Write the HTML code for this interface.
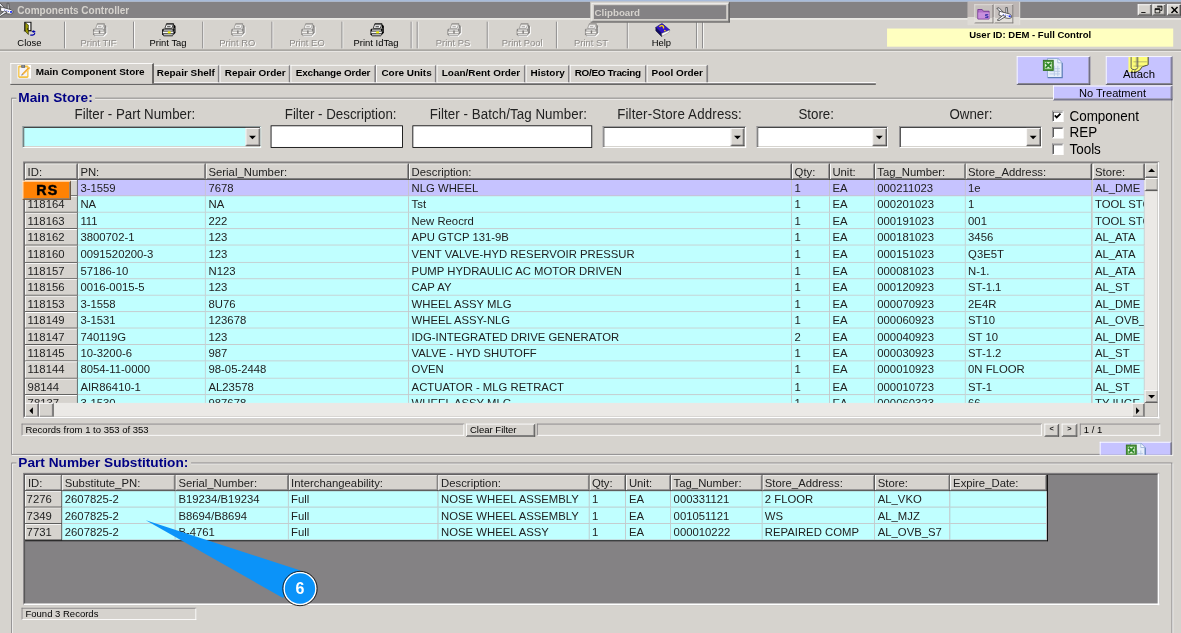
<!DOCTYPE html>
<html>
<head>
<meta charset="utf-8">
<title>Components Controller</title>
<style>
html,body{margin:0;padding:0;width:1181px;height:633px;overflow:hidden;background:#d6d3ce;}
#scale{position:absolute;left:0;top:0;width:1366px;height:733px;transform:scale(0.864568);transform-origin:0 0;background:#d6d3ce;font-family:"Liberation Sans",sans-serif;color:#000;overflow:hidden;filter:blur(0.4px);}
.abs{position:absolute;}
/* ---------- title bar ---------- */
#topstrip{left:0;top:0;width:1366px;height:2.5px;background:linear-gradient(#9fb4d6,#cfdbeb);}
#titlebar{left:0;top:2.4px;width:1366px;height:18.6px;background:#848284;}
#titletext{left:20px;top:5.1px;font-size:11.6px;font-weight:bold;color:#d6d3ce;white-space:nowrap;}
.raised{border:1px solid;border-color:#fff #404040 #404040 #fff;box-shadow:inset -1px -1px 0 #848284;}
.sunken{border:1px solid;border-color:#848284 #fff #fff #848284;box-shadow:inset 1px 1px 0 #404040;}
/* ---------- toolbar ---------- */
.tbtn{position:absolute;top:22px;width:80px;height:36px;text-align:center;font-size:10.9px;white-space:nowrap;}
.tbtn .lbl{position:absolute;left:0;right:0;top:21px;line-height:13px;}
.tbtn.dis .lbl{color:#8e8b88;text-shadow:1px 1px 0 #fff;}
.tbtn svg{position:absolute;left:32.8px;top:4.5px;}
.tsep{position:absolute;top:24.6px;width:1px;height:31.6px;margin-left:-1px;background:#848284;box-shadow:1px 0 0 #fff;}
#tbtop{left:0;top:21px;width:1366px;height:2.3px;background:linear-gradient(#f1f0ed,#e6e4e0);}
#tbline{left:0;top:57.4px;width:1366px;height:1.7px;background:#a9a7a3;box-shadow:0 1px 0 #eceae7;}
/* ---------- tabs ---------- */
.tab{position:absolute;top:75px;height:20px;padding-top:1px;font-size:11.5px;font-weight:bold;white-space:nowrap;line-height:15px;border-top:1px solid #fff;border-left:1px solid #fff;border-right:2px solid #848284;box-sizing:border-box;padding-left:5px;background:#d6d3ce;}
#tabline{left:12px;top:95px;width:1001px;height:1px;background:#fff;box-shadow:0 1px 0 #848284,0 2px 0 #404040;}
#tab0{top:73px;left:12px;width:166px;height:24px;border-right:2px solid #5a5856;z-index:2;line-height:15px;}
/* ---------- group boxes ---------- */
.grp{position:absolute;box-sizing:border-box;border:1px solid #848284;box-shadow:1px 1px 0 #fff, inset 1px 1px 0 #fff;}
.grptitle{position:absolute;font-size:15.8px;font-weight:bold;color:#000084;background:#d6d3ce;white-space:nowrap;line-height:10px;margin-top:4px;padding:0 3px 0 2px;}
.flabel{color:#222;position:absolute;font-size:16px;white-space:nowrap;line-height:18px;text-align:center;transform:scaleX(0.9625);transform-origin:50% 50%;}
.fbox{position:absolute;background:#fff;box-sizing:border-box;border:1px solid;border-color:#848284 #fff #fff #848284;box-shadow:inset 1px 1px 0 #404040, inset -1px -1px 0 #d6d3ce;}
.fbox.flat{border:1.3px solid #000;box-shadow:none;}
.dd{position:absolute;right:0.6px;top:1px;bottom:1px;width:16.6px;background:#d6d3ce;box-sizing:border-box;border:1px solid;border-color:#fff #404040 #404040 #fff;box-shadow:inset -1px -1px 0 #848284;}
.dd:after{content:"";position:absolute;left:3px;top:8.6px;border:4px solid transparent;border-top:4.4px solid #000;border-bottom:0;}
/* ---------- grids ---------- */
.grid{position:absolute;overflow:hidden;background:#848284;box-sizing:border-box;border:solid;border-width:1px 2px 2px 1px;border-color:#848284 #fff #fff #848284;}
.grid .gi{position:absolute;left:0;top:0;right:0;bottom:0;border:solid #404040;border-width:1px 0 0 1px;overflow:hidden;}
.grow{position:absolute;left:2px;height:19px;white-space:nowrap;}
.cell{color:#222;position:absolute;top:0;height:19px;box-sizing:border-box;font-size:13.1px;line-height:19px;padding-left:3px;overflow:hidden;white-space:nowrap;background:#c0ffff;border-right:1px solid #c6c3c6;border-bottom:1px solid #c6c3c6;}
.sel .cell{background:#c6c3ff;}
.cell.h{background:#d6d3ce;border:0;border-right:1px solid #404040;border-bottom:1px solid #404040;box-shadow:inset 1px 1px 0 #fff, inset -1px -1px 0 #848284;line-height:18px;height:20px;}
.cell.id{background:#d6d3ce;border-right:1px solid #404040;border-bottom:1px solid #404040;box-shadow:inset 1px 1px 0 #fff;padding-left:3px;}
.small{font-size:11.0px;white-space:nowrap;}

.lav{background:#c6c3ff;box-sizing:border-box;border:1px solid;border-color:#fff #404040 #404040 #fff;box-shadow:inset -1px -1px 0 #848284;}
.rs{background:#ff8204;box-sizing:border-box;border:1.4px solid;border-color:#fff #55504c #55504c #fff;box-shadow:inset -1px -1px 0 #8a8682;z-index:4;-webkit-text-stroke:0.55px #000;}
.sunk1{box-sizing:border-box;border:1px solid;border-color:#848284 #fff #fff #848284;}
.raised{box-sizing:border-box;}
.track{background:#ebe9e6;}
.sbtn{background:#d6d3ce;box-sizing:border-box;border:1px solid;border-color:#fff #404040 #404040 #fff;box-shadow:inset -1px -1px 0 #848284;}
#userbox{left:1025.9px;top:32.5px;width:331.4px;height:21.6px;background:#ffffc0;text-align:center;font-size:11.0px;font-weight:bold;line-height:15px;}
#clip{left:683px;top:2.4px;width:160.7px;height:23.6px;background:#d6d3ce;box-sizing:border-box;border:1px solid;border-color:#d6d3ce #404040 #404040 #d6d3ce;box-shadow:inset 1px 1px 0 #fff, inset -1px -1px 0 #848284;z-index:5;}
#clip .t{position:absolute;left:3px;top:3px;right:3px;bottom:3px;background:#848284;color:#d6d3ce;font-weight:bold;font-size:11.3px;line-height:16px;padding-left:0.6px;}
#mini{left:1119px;top:2.4px;width:60.2px;height:27px;background:linear-gradient(#bdb6b4 0,#bdb6b4 18px,#dedbd6 18px,#dedbd6 100%);z-index:5;box-shadow:1px 0 0 #e4e2de;}
.mbtn{position:absolute;top:3px;width:22.4px;height:22px;box-sizing:border-box;border:1px solid;border-color:#e6e3e0 #7c7876 #7c7876 #e6e3e0;background:linear-gradient(#c6c0be 0,#c6c0be 15px,#e2dfda 15px,#e2dfda 100%);}
.wbtn{position:absolute;top:4.8px;height:13.4px;background:#d6d3ce;box-sizing:border-box;border:1px solid;border-color:#fff #404040 #404040 #fff;box-shadow:inset -1px -1px 0 #848284;}
</style>
</head>
<body>
<div id="scale">
<!-- TITLE -->
<div id="topstrip" class="abs"></div>
<div id="titlebar" class="abs"></div>
<div id="titletext" class="abs">Components Controller</div>

<!-- app icon -->
<svg class="abs" style="left:-4.5px;top:3.2px" width="21" height="17" viewBox="0 0 21 17"><path d="M2 1.6L4.6 1 10.4 7.2 7.6 7.8Z" fill="#eef0f6" stroke="#3c3c3c" stroke-width=".9"/><path d="M12.4 .5H14L14.8 8.4 12.4 7.6Z" fill="#eef0f6" stroke="#3c3c3c" stroke-width=".9"/><path d="M5 5L17 8.2Q20.2 10 18.6 12.6 16.4 14 12.4 12.8L4.4 9.4Z" fill="#fbfbff" stroke="#3c3c3c" stroke-width=".9"/><path d="M9 9.8L12.4 11 4.6 15.8 2.4 15.2Z" fill="#eef0f6" stroke="#3c3c3c" stroke-width=".9"/><rect x="15.6" y="9.8" width="2.4" height="2" fill="#1c2cf0"/><rect x="9" y="8.2" width="1" height="1" fill="#3040e0"/><rect x="11.4" y="9" width="1" height="1" fill="#3040e0"/><rect x="13.4" y="9.7" width="1" height="1" fill="#3040e0"/></svg>
<!-- clipboard mini window -->
<div id="clip" class="abs"><div class="t">Clipboard</div></div>
<!-- mini toolbar -->
<div id="mini" class="abs">
<div class="mbtn" style="left:7.6px"><svg class="abs" style="left:2px;top:2px" width="17" height="15" viewBox="0 0 17 15">
<path d="M1 3h5l1.5 2H14v9H1z" fill="#b070c8" stroke="#703090" stroke-width="1"/><path d="M1.5 6.5h13v7h-13z" fill="#c890dc"/>
<text x="11.3" y="12.6" font-family="Liberation Sans,sans-serif" font-size="8.5" font-weight="bold" fill="#2020a0" text-anchor="middle">s</text></svg></div>
<div class="mbtn" style="left:30.6px"><svg class="abs" style="left:0.5px;top:2px" width="21" height="17" viewBox="0 0 21 17"><path d="M2 1.6L4.6 1 10.4 7.2 7.6 7.8Z" fill="#eef0f6" stroke="#3c3c3c" stroke-width=".9"/><path d="M12.4 .5H14L14.8 8.4 12.4 7.6Z" fill="#eef0f6" stroke="#3c3c3c" stroke-width=".9"/><path d="M5 5L17 8.2Q20.2 10 18.6 12.6 16.4 14 12.4 12.8L4.4 9.4Z" fill="#fbfbff" stroke="#3c3c3c" stroke-width=".9"/><path d="M9 9.8L12.4 11 4.6 15.8 2.4 15.2Z" fill="#eef0f6" stroke="#3c3c3c" stroke-width=".9"/><rect x="15.6" y="9.8" width="2.4" height="2" fill="#1c2cf0"/><rect x="9" y="8.2" width="1" height="1" fill="#3040e0"/><rect x="11.4" y="9" width="1" height="1" fill="#3040e0"/><rect x="13.4" y="9.7" width="1" height="1" fill="#3040e0"/></svg></div>
</div>
<!-- window buttons -->
<div class="wbtn" style="left:1316px;width:15.6px"><div class="abs" style="left:2.8px;top:7.8px;width:5.6px;height:1.7px;background:#000"></div></div>
<div class="wbtn" style="left:1332.6px;width:15.6px"><svg class="abs" style="left:1.2px;top:0.6px" width="10" height="10" viewBox="0 0 10 10"><path d="M3.5 1h5.5v5h-2M3.5 2h5.5" fill="none" stroke="#000" stroke-width="1"/><path d="M1 4h5.5v5h-5.5zM1 5h5.5" fill="#d6d3ce" stroke="#000" stroke-width="1"/></svg></div>
<div class="wbtn" style="left:1349.8px;width:16.4px"><svg class="abs" style="left:3.4px;top:1.5px" width="10" height="9" viewBox="0 0 10 9"><path d="M1 1l7 7M8 1l-7 7" stroke="#000" stroke-width="1.7"/></svg></div>
<!-- user box -->
<div id="userbox" class="abs">User ID: DEM - Full Control</div>
<!-- TOOLBAR -->
<div id="toolbar">
<div class="tbtn" style="left:-6px"><svg class="ticon" style="margin-top:-1.1px" width="18" height="17" viewBox="0 0 18 17"><path d="M0 10.9H11" stroke="#8a8886" stroke-width=".9"/><rect x="1.7" y=".6" width="7.1" height="9.9" fill="#fff" stroke="#000" stroke-width="1.2"/><path d="M2.2 1.3L5.8 3.9V14.9L2.2 11.2Z" fill="#9c9a00" stroke="#151500" stroke-width=".7"/><rect x="4.3" y="8" width="1.3" height="1.1" fill="#000"/><path d="M8 15.6h2.6q2.6-.3 2.8-2.8" fill="none" stroke="#0000a8" stroke-width="1.3"/><path d="M9.4 11.6L12 10l2.3 1.7-2.2 1.3z" fill="#0000a8"/></svg><div class="lbl">Close</div></div>
<div class="tbtn dis" style="left:74px"><svg class="ticon" width="18" height="17" viewBox="0 0 18 17"><linearGradient id="pgd" x1="0" y1="0" x2="0" y2="1"><stop offset="0.1" stop-color="#cfcdca"/><stop offset="0.55" stop-color="#fbfaf9"/></linearGradient><g transform="translate(1,1)" fill="#fff"><path d="M1.5 6.4H14V12L12.6 14.8H2.4L.6 12.6V7.4Z"/><path d="M13.6 .9L16 3.2V11L13.6 13.6Z"/><path d="M5.5 .3H14L11.8 5.8H3.5Z"/></g><path d="M13.6 .9L16 3.2V11L13.6 13.6Z" fill="#878583"/><path d="M1.5 6.2H14V12L12.6 14.9H2.4L.5 12.6V7.4Z" fill="#878583"/><path d="M5.6 .5H13.9L11.7 5.8H3.7Z" fill="url(#pgd)" stroke="#8a8886" stroke-width=".8"/><path d="M5.4 .5H14" stroke="#8a8886" stroke-width="1"/><path d="M6.3 3.9H10.3" stroke="#8a8886" stroke-width=".9"/><rect x="2.2" y="7.15" width="10.6" height="1.35" fill="#f8f7f5"/><rect x="1.4" y="9.4" width="12.2" height="2.2" fill="#f6f4f1"/><rect x="7.3" y="8.2" width="1.6" height="3.6" fill="#7c7a78"/><rect x="2.2" y="12.6" width="10.6" height="1.35" fill="#f8f7f5"/><rect x="14.3" y="6" width=".9" height=".9" fill="#c8c8c8"/><rect x="14.3" y="8.4" width=".9" height=".9" fill="#c8c8c8"/></svg><div class="lbl">Print TIF</div></div>
<div class="tbtn" style="left:154.4px"><svg class="ticon" width="18" height="17" viewBox="0 0 18 17"><linearGradient id="pge" x1="0" y1="0" x2="0" y2="1"><stop offset="0.1" stop-color="#a0a0a0"/><stop offset="0.55" stop-color="#fff"/></linearGradient><path d="M13.6 .9L16 3.2V11L13.6 13.6Z" fill="#000"/><path d="M1.5 6.2H14V12L12.6 14.9H2.4L.5 12.6V7.4Z" fill="#000"/><path d="M5.6 .5H13.9L11.7 5.8H3.7Z" fill="url(#pge)" stroke="#000" stroke-width=".8"/><path d="M5.4 .5H14" stroke="#000" stroke-width="1"/><path d="M6.3 3.9H10.3" stroke="#000" stroke-width=".9"/><rect x="2.2" y="7.15" width="10.6" height="1.35" fill="#f4f4f4"/><rect x="1.4" y="9.4" width="12.2" height="2.2" fill="#f6f6f6"/><rect x="7.1" y="9.3" width="3.3" height="2.3" fill="#f2f200"/><rect x="2.2" y="12.6" width="10.6" height="1.35" fill="#f4f4f4"/><rect x="14.3" y="6" width=".9" height=".9" fill="#c8c8c8"/><rect x="14.3" y="8.4" width=".9" height=".9" fill="#c8c8c8"/></svg><div class="lbl">Print Tag</div></div>
<div class="tbtn dis" style="left:234.60000000000002px"><svg class="ticon" width="18" height="17" viewBox="0 0 18 17"><linearGradient id="pgd" x1="0" y1="0" x2="0" y2="1"><stop offset="0.1" stop-color="#cfcdca"/><stop offset="0.55" stop-color="#fbfaf9"/></linearGradient><g transform="translate(1,1)" fill="#fff"><path d="M1.5 6.4H14V12L12.6 14.8H2.4L.6 12.6V7.4Z"/><path d="M13.6 .9L16 3.2V11L13.6 13.6Z"/><path d="M5.5 .3H14L11.8 5.8H3.5Z"/></g><path d="M13.6 .9L16 3.2V11L13.6 13.6Z" fill="#878583"/><path d="M1.5 6.2H14V12L12.6 14.9H2.4L.5 12.6V7.4Z" fill="#878583"/><path d="M5.6 .5H13.9L11.7 5.8H3.7Z" fill="url(#pgd)" stroke="#8a8886" stroke-width=".8"/><path d="M5.4 .5H14" stroke="#8a8886" stroke-width="1"/><path d="M6.3 3.9H10.3" stroke="#8a8886" stroke-width=".9"/><rect x="2.2" y="7.15" width="10.6" height="1.35" fill="#f8f7f5"/><rect x="1.4" y="9.4" width="12.2" height="2.2" fill="#f6f4f1"/><rect x="7.3" y="8.2" width="1.6" height="3.6" fill="#7c7a78"/><rect x="2.2" y="12.6" width="10.6" height="1.35" fill="#f8f7f5"/><rect x="14.3" y="6" width=".9" height=".9" fill="#c8c8c8"/><rect x="14.3" y="8.4" width=".9" height=".9" fill="#c8c8c8"/></svg><div class="lbl">Print RO</div></div>
<div class="tbtn dis" style="left:315px"><svg class="ticon" width="18" height="17" viewBox="0 0 18 17"><linearGradient id="pgd" x1="0" y1="0" x2="0" y2="1"><stop offset="0.1" stop-color="#cfcdca"/><stop offset="0.55" stop-color="#fbfaf9"/></linearGradient><g transform="translate(1,1)" fill="#fff"><path d="M1.5 6.4H14V12L12.6 14.8H2.4L.6 12.6V7.4Z"/><path d="M13.6 .9L16 3.2V11L13.6 13.6Z"/><path d="M5.5 .3H14L11.8 5.8H3.5Z"/></g><path d="M13.6 .9L16 3.2V11L13.6 13.6Z" fill="#878583"/><path d="M1.5 6.2H14V12L12.6 14.9H2.4L.5 12.6V7.4Z" fill="#878583"/><path d="M5.6 .5H13.9L11.7 5.8H3.7Z" fill="url(#pgd)" stroke="#8a8886" stroke-width=".8"/><path d="M5.4 .5H14" stroke="#8a8886" stroke-width="1"/><path d="M6.3 3.9H10.3" stroke="#8a8886" stroke-width=".9"/><rect x="2.2" y="7.15" width="10.6" height="1.35" fill="#f8f7f5"/><rect x="1.4" y="9.4" width="12.2" height="2.2" fill="#f6f4f1"/><rect x="7.3" y="8.2" width="1.6" height="3.6" fill="#7c7a78"/><rect x="2.2" y="12.6" width="10.6" height="1.35" fill="#f8f7f5"/><rect x="14.3" y="6" width=".9" height=".9" fill="#c8c8c8"/><rect x="14.3" y="8.4" width=".9" height=".9" fill="#c8c8c8"/></svg><div class="lbl">Print EO</div></div>
<div class="tbtn" style="left:395px"><svg class="ticon" width="18" height="17" viewBox="0 0 18 17"><linearGradient id="pge" x1="0" y1="0" x2="0" y2="1"><stop offset="0.1" stop-color="#a0a0a0"/><stop offset="0.55" stop-color="#fff"/></linearGradient><path d="M13.6 .9L16 3.2V11L13.6 13.6Z" fill="#000"/><path d="M1.5 6.2H14V12L12.6 14.9H2.4L.5 12.6V7.4Z" fill="#000"/><path d="M5.6 .5H13.9L11.7 5.8H3.7Z" fill="url(#pge)" stroke="#000" stroke-width=".8"/><path d="M5.4 .5H14" stroke="#000" stroke-width="1"/><path d="M6.3 3.9H10.3" stroke="#000" stroke-width=".9"/><rect x="2.2" y="7.15" width="10.6" height="1.35" fill="#f4f4f4"/><rect x="1.4" y="9.4" width="12.2" height="2.2" fill="#f6f6f6"/><rect x="7.1" y="9.3" width="3.3" height="2.3" fill="#f2f200"/><rect x="2.2" y="12.6" width="10.6" height="1.35" fill="#f4f4f4"/><rect x="14.3" y="6" width=".9" height=".9" fill="#c8c8c8"/><rect x="14.3" y="8.4" width=".9" height=".9" fill="#c8c8c8"/></svg><div class="lbl">Print IdTag</div></div>
<div class="tbtn dis" style="left:484px"><svg class="ticon" width="18" height="17" viewBox="0 0 18 17"><linearGradient id="pgd" x1="0" y1="0" x2="0" y2="1"><stop offset="0.1" stop-color="#cfcdca"/><stop offset="0.55" stop-color="#fbfaf9"/></linearGradient><g transform="translate(1,1)" fill="#fff"><path d="M1.5 6.4H14V12L12.6 14.8H2.4L.6 12.6V7.4Z"/><path d="M13.6 .9L16 3.2V11L13.6 13.6Z"/><path d="M5.5 .3H14L11.8 5.8H3.5Z"/></g><path d="M13.6 .9L16 3.2V11L13.6 13.6Z" fill="#878583"/><path d="M1.5 6.2H14V12L12.6 14.9H2.4L.5 12.6V7.4Z" fill="#878583"/><path d="M5.6 .5H13.9L11.7 5.8H3.7Z" fill="url(#pgd)" stroke="#8a8886" stroke-width=".8"/><path d="M5.4 .5H14" stroke="#8a8886" stroke-width="1"/><path d="M6.3 3.9H10.3" stroke="#8a8886" stroke-width=".9"/><rect x="2.2" y="7.15" width="10.6" height="1.35" fill="#f8f7f5"/><rect x="1.4" y="9.4" width="12.2" height="2.2" fill="#f6f4f1"/><rect x="7.3" y="8.2" width="1.6" height="3.6" fill="#7c7a78"/><rect x="2.2" y="12.6" width="10.6" height="1.35" fill="#f8f7f5"/><rect x="14.3" y="6" width=".9" height=".9" fill="#c8c8c8"/><rect x="14.3" y="8.4" width=".9" height=".9" fill="#c8c8c8"/></svg><div class="lbl">Print PS</div></div>
<div class="tbtn dis" style="left:564px"><svg class="ticon" width="18" height="17" viewBox="0 0 18 17"><linearGradient id="pgd" x1="0" y1="0" x2="0" y2="1"><stop offset="0.1" stop-color="#cfcdca"/><stop offset="0.55" stop-color="#fbfaf9"/></linearGradient><g transform="translate(1,1)" fill="#fff"><path d="M1.5 6.4H14V12L12.6 14.8H2.4L.6 12.6V7.4Z"/><path d="M13.6 .9L16 3.2V11L13.6 13.6Z"/><path d="M5.5 .3H14L11.8 5.8H3.5Z"/></g><path d="M13.6 .9L16 3.2V11L13.6 13.6Z" fill="#878583"/><path d="M1.5 6.2H14V12L12.6 14.9H2.4L.5 12.6V7.4Z" fill="#878583"/><path d="M5.6 .5H13.9L11.7 5.8H3.7Z" fill="url(#pgd)" stroke="#8a8886" stroke-width=".8"/><path d="M5.4 .5H14" stroke="#8a8886" stroke-width="1"/><path d="M6.3 3.9H10.3" stroke="#8a8886" stroke-width=".9"/><rect x="2.2" y="7.15" width="10.6" height="1.35" fill="#f8f7f5"/><rect x="1.4" y="9.4" width="12.2" height="2.2" fill="#f6f4f1"/><rect x="7.3" y="8.2" width="1.6" height="3.6" fill="#7c7a78"/><rect x="2.2" y="12.6" width="10.6" height="1.35" fill="#f8f7f5"/><rect x="14.3" y="6" width=".9" height=".9" fill="#c8c8c8"/><rect x="14.3" y="8.4" width=".9" height=".9" fill="#c8c8c8"/></svg><div class="lbl">Print Pool</div></div>
<div class="tbtn dis" style="left:643.6px"><svg class="ticon" width="18" height="17" viewBox="0 0 18 17"><linearGradient id="pgd" x1="0" y1="0" x2="0" y2="1"><stop offset="0.1" stop-color="#cfcdca"/><stop offset="0.55" stop-color="#fbfaf9"/></linearGradient><g transform="translate(1,1)" fill="#fff"><path d="M1.5 6.4H14V12L12.6 14.8H2.4L.6 12.6V7.4Z"/><path d="M13.6 .9L16 3.2V11L13.6 13.6Z"/><path d="M5.5 .3H14L11.8 5.8H3.5Z"/></g><path d="M13.6 .9L16 3.2V11L13.6 13.6Z" fill="#878583"/><path d="M1.5 6.2H14V12L12.6 14.9H2.4L.5 12.6V7.4Z" fill="#878583"/><path d="M5.6 .5H13.9L11.7 5.8H3.7Z" fill="url(#pgd)" stroke="#8a8886" stroke-width=".8"/><path d="M5.4 .5H14" stroke="#8a8886" stroke-width="1"/><path d="M6.3 3.9H10.3" stroke="#8a8886" stroke-width=".9"/><rect x="2.2" y="7.15" width="10.6" height="1.35" fill="#f8f7f5"/><rect x="1.4" y="9.4" width="12.2" height="2.2" fill="#f6f4f1"/><rect x="7.3" y="8.2" width="1.6" height="3.6" fill="#7c7a78"/><rect x="2.2" y="12.6" width="10.6" height="1.35" fill="#f8f7f5"/><rect x="14.3" y="6" width=".9" height=".9" fill="#c8c8c8"/><rect x="14.3" y="8.4" width=".9" height=".9" fill="#c8c8c8"/></svg><div class="lbl">Print ST</div></div>
<div class="tbtn" style="left:725px"><svg class="ticon" width="18" height="17" viewBox="0 0 18 17"><path d="M.4 4.7L7.7 0 16.8 7.7 7.3 11.7Z" fill="#3514c8" stroke="#10106a" stroke-width=".6"/><path d="M.4 4.7L7.3 11.7V15.2L.4 8.4Z" fill="#1a10b0" stroke="#000" stroke-width=".7"/><path d="M.7 6.4l6.4 6.6M.7 7.7l6.4 6.6" stroke="#000" stroke-width=".5"/><path d="M7.3 11.7L16.8 7.7 16 10.2 7.7 14.8Z" fill="#fff" stroke="#707070" stroke-width=".5"/><path d="M4.9 4.3q.6-2 3-1.7 2 .6 1.6 3.4" fill="none" stroke="#ffe000" stroke-width="1.5"/><rect x="10.2" y="7.6" width="1.6" height="1.6" fill="#ffe000" transform="rotate(20 11 8.4)"/></svg><div class="lbl">Help</div></div>
<div class="tsep" style="left:74.6px"></div>
<div class="tsep" style="left:154.6px"></div>
<div class="tsep" style="left:234.9px"></div>
<div class="tsep" style="left:315px"></div>
<div class="tsep" style="left:395.6px"></div>
<div class="tsep" style="left:476px"></div>
<div class="tsep" style="left:483.4px"></div>
<div class="tsep" style="left:564.3px"></div>
<div class="tsep" style="left:644px"></div>
<div class="tsep" style="left:725.6px"></div>
<div class="tsep" style="left:805.6px"></div>
<div class="tsep" style="left:813.4px"></div>
</div>
<div id="tbtop" class="abs"></div>
<div id="tbline" class="abs"></div>
<!-- TABS -->
<div id="tabs">
<div id="tabline" class="abs"></div>
<div id="tab0" class="tab"><svg class="abs" style="left:6.8px;top:0.8px" width="16.2" height="16" viewBox="0 0 16.2 16"><rect x="0" y="0" width="16.2" height="16" fill="#fff"/><rect x="1" y=".7" width="12" height="14.4" rx="1.6" fill="#f5c242"/><rect x="2.5" y="3" width="9" height="10.2" fill="#f3f3fb"/><rect x="4.6" y=".3" width="4.4" height="3.1" rx=".6" fill="#5a6272"/><rect x="5.6" y=".9" width="2.4" height=".9" fill="#c8ccd4"/><path d="M13.4 2.2L15.2 3.8 7 11.6 5 12.2 5.4 10.2Z" fill="#f0a62c"/><path d="M13 3.2L14.2 4.3 6.6 11.4" fill="none" stroke="#fbe29a" stroke-width=".8"/><path d="M5.4 10.2L7 11.6 4.4 12.6Z" fill="#8890a0"/></svg><span style="position:absolute;left:28.4px;top:1.5px">Main Component Store</span></div>
<div class="tab" style="left:176.4px;width:77.69999999999999px;letter-spacing:0px;padding-left:4px">Repair Shelf</div>
<div class="tab" style="left:254.1px;width:81.9px;letter-spacing:0px;padding-left:5px">Repair Order</div>
<div class="tab" style="left:336px;width:99.19999999999999px;letter-spacing:-0.18px;padding-left:5px">Exchange Order</div>
<div class="tab" style="left:435.2px;width:69.80000000000001px;letter-spacing:0px;padding-left:5px">Core Units</div>
<div class="tab" style="left:505px;width:102.70000000000005px;letter-spacing:0px;padding-left:5px">Loan/Rent Order</div>
<div class="tab" style="left:607.7px;width:51.0px;letter-spacing:0px;padding-left:5px">History</div>
<div class="tab" style="left:658.7px;width:89.0px;letter-spacing:-0.36px;padding-left:5px">RO/EO Tracing</div>
<div class="tab" style="left:747.7px;width:71.0px;letter-spacing:0px;padding-left:5px">Pool Order</div>
</div>
<!-- MAIN GROUP -->
<div id="main"><div class="abs lav" style="left:1176.43px;top:65.0px;width:84.08px;height:32.51px;"><svg class="abs" style="left:29px;top:1.3px" width="24" height="24" viewBox="0 0 24 24"><path d="M5.5 .6H17.5L22.6 5.6V22.8H5.5Z" fill="#e6eefa" stroke="#8aa4d0" stroke-width="1"/><path d="M22.6 6V22.8H6" fill="none" stroke="#5c7cb8" stroke-width="1.2"/><path d="M17.5 .6V5.6H22.6Z" fill="#f8fbff" stroke="#8aa4d0" stroke-width=".8"/><path d="M8 15.5H20M8 18.5H20M8 12.5H20M13.5 9V21M17.5 9V21" stroke="#b4c6e4" stroke-width="1"/><rect x=".6" y="2.8" width="11.6" height="11.6" fill="#4f9a3c" stroke="#2f6e22" stroke-width="1.1"/><rect x="2.6" y="4.8" width="7.8" height="7.6" fill="#e4f4dc"/><path d="M3.4 5.6L9.6 11.6M9.6 5.6L3.4 11.6" stroke="#2f8a2a" stroke-width="2.1"/></svg></div>
<div class="abs lav" style="left:1278.9px;top:65.0px;width:76.92px;height:32.51px;"><svg class="abs" style="left:25.6px;top:0px" width="25" height="19" viewBox="0 0 25 19"><path d="M0 0H23V8.6Q22.6 9.6 21.4 9.6L16.4 11Q13 17 8.8 17.4H0Z" fill="#fdfd78"/><path d="M23 0V8.6Q22.6 9.6 21.4 9.6L16.4 11Q13 17 8.8 17.4" fill="none" stroke="#3c3c28" stroke-width="1.1"/><path d="M6 5.5H21.5M6 10.4H17" stroke="#a8a86a" stroke-width=".9"/><path d="M3.3 0V12.4Q3.6 14.6 7 14.6 10.6 14.4 11 12V0" fill="none" stroke="#5a5a5a" stroke-width="1.1"/><path d="M9.3 0V11.4" stroke="#8c8c70" stroke-width=".9"/></svg><div class="abs" style="left:0;right:0;top:11.2px;text-align:center;font-size:13.1px;line-height:18px">Attach</div></div>
<div class="abs lav" style="left:1217.6px;top:99.24px;width:138.22px;height:17.12px;z-index:3"><div style="text-align:center;font-size:12.8px;line-height:15px">No Treatment</div></div>
<div class="abs grp" style="left:12.61px;top:113.35px;width:1343.56px;height:412.23px;"></div>
<div class="grptitle" style="left:19.2px;top:103.64px">Main Store:</div>
<div class="flabel" style="left:35.68000000000001px;width:240px;top:124.22px;letter-spacing:0px">Filter - Part Number:</div>
<div class="flabel" style="left:274.42px;width:240px;top:124.22px;letter-spacing:0px">Filter - Description:</div>
<div class="flabel" style="left:468.15px;width:240px;top:124.22px;letter-spacing:0.08px">Filter - Batch/Tag Number:</div>
<div class="flabel" style="left:666.4px;width:240px;top:124.22px;letter-spacing:0.2px">Filter-Store Address:</div>
<div class="flabel" style="left:824.06px;width:240px;top:124.22px;letter-spacing:0px">Store:</div>
<div class="flabel" style="left:1002.6400000000001px;width:240px;top:124.22px;letter-spacing:0px">Owner:</div>
<div class="abs fbox" style="left:26.02px;top:145.51px;width:276.1px;height:25.67px;background:#c0ffff"><div class="dd"></div></div>
<div class="abs fbox flat" style="left:313.45px;top:145.16px;width:152.56px;height:25.79px;"></div>
<div class="abs fbox flat" style="left:477.35px;top:145.16px;width:207.85px;height:25.79px;"></div>
<div class="abs fbox" style="left:697.11px;top:145.51px;width:165.75px;height:25.67px;"><div class="dd"></div></div>
<div class="abs fbox" style="left:875.12px;top:145.51px;width:152.21px;height:25.67px;"><div class="dd"></div></div>
<div class="abs fbox" style="left:1040.06px;top:145.51px;width:165.4px;height:25.67px;"><div class="dd"></div></div>
<div class="abs sunken" style="left:1217.26px;top:127.78999999999999px;width:11px;height:11px;background:#fff"><svg width="11" height="11" viewBox="0 0 11 11" style="position:absolute;left:0;top:0"><path d="M2 4.5l2.2 2.3L8.6 2.4" fill="none" stroke="#000" stroke-width="2"/></svg></div>
<div class="abs" style="left:1236.8px;top:124.99px;font-size:16.2px;line-height:18px;white-space:nowrap;transform:scaleX(0.96);transform-origin:0 50%">Component</div>
<div class="abs sunken" style="left:1217.26px;top:146.64px;width:11px;height:11px;background:#fff"></div>
<div class="abs" style="left:1236.8px;top:143.83999999999997px;font-size:16.2px;line-height:18px;white-space:nowrap;transform:scaleX(0.96);transform-origin:0 50%">REP</div>
<div class="abs sunken" style="left:1217.26px;top:165.61px;width:11px;height:11px;background:#fff"></div>
<div class="abs" style="left:1236.8px;top:162.81px;font-size:16.2px;line-height:18px;white-space:nowrap;transform:scaleX(0.96);transform-origin:0 50%">Tools</div>
<div class="abs grid" style="left:27.07px;top:187.26px;width:1314.18px;height:297.03px;"><div class="gi" style="background:#d6d3ce"><div class="grow" style="left:0;top:0;height:18.71px;z-index:2"><div class="cell h" style="height:18.71px;line-height:19px;left:-0.15px;width:61.07px">ID:</div><div class="cell h" style="height:18.71px;line-height:19px;left:60.92px;width:148.16px">PN:</div><div class="cell h" style="height:18.71px;line-height:19px;left:209.08px;width:234.92px">Serial_Number:</div><div class="cell h" style="height:18.71px;line-height:19px;left:444.0px;width:442.99px">Description:</div><div class="cell h" style="height:18.71px;line-height:19px;left:886.99px;width:43.73px">Qty:</div><div class="cell h" style="height:18.71px;line-height:19px;left:930.72px;width:51.93px">Unit:</div><div class="cell h" style="height:18.71px;line-height:19px;left:982.65px;width:105.02px">Tag_Number:</div><div class="cell h" style="height:18.71px;line-height:19px;left:1087.67px;width:146.78px">Store_Address:</div><div class="cell h" style="height:18.71px;line-height:19px;left:1234.45px;width:60.84px">Store:</div></div><div class="grow sel" style="left:0;top:18.71px;height:19.13px"><div class="cell id" style="left:-0.15px;width:61.07px;height:19.13px;padding-left:3px">RS</div><div class="cell" style="left:60.92px;width:148.16px;height:19.13px">3-1559</div><div class="cell" style="left:209.08px;width:234.92px;height:19.13px">7678</div><div class="cell" style="left:444.0px;width:442.99px;height:19.13px">NLG WHEEL</div><div class="cell" style="left:886.99px;width:43.73px;height:19.13px">1</div><div class="cell" style="left:930.72px;width:51.93px;height:19.13px">EA</div><div class="cell" style="left:982.65px;width:105.02px;height:19.13px">000211023</div><div class="cell" style="left:1087.67px;width:146.78px;height:19.13px">1e</div><div class="cell" style="left:1234.45px;width:60.84px;height:19.13px">AL_DME</div></div><div class="grow" style="left:0;top:37.84px;height:19.13px"><div class="cell id" style="left:-0.15px;width:61.07px;height:19.13px;padding-left:3px">118164</div><div class="cell" style="left:60.92px;width:148.16px;height:19.13px">NA</div><div class="cell" style="left:209.08px;width:234.92px;height:19.13px">NA</div><div class="cell" style="left:444.0px;width:442.99px;height:19.13px">Tst</div><div class="cell" style="left:886.99px;width:43.73px;height:19.13px">1</div><div class="cell" style="left:930.72px;width:51.93px;height:19.13px">EA</div><div class="cell" style="left:982.65px;width:105.02px;height:19.13px">000201023</div><div class="cell" style="left:1087.67px;width:146.78px;height:19.13px">1</div><div class="cell" style="left:1234.45px;width:60.84px;height:19.13px">TOOL STORE</div></div><div class="grow" style="left:0;top:56.97px;height:19.13px"><div class="cell id" style="left:-0.15px;width:61.07px;height:19.13px;padding-left:3px">118163</div><div class="cell" style="left:60.92px;width:148.16px;height:19.13px">111</div><div class="cell" style="left:209.08px;width:234.92px;height:19.13px">222</div><div class="cell" style="left:444.0px;width:442.99px;height:19.13px">New Reocrd</div><div class="cell" style="left:886.99px;width:43.73px;height:19.13px">1</div><div class="cell" style="left:930.72px;width:51.93px;height:19.13px">EA</div><div class="cell" style="left:982.65px;width:105.02px;height:19.13px">000191023</div><div class="cell" style="left:1087.67px;width:146.78px;height:19.13px">001</div><div class="cell" style="left:1234.45px;width:60.84px;height:19.13px">TOOL STORE</div></div><div class="grow" style="left:0;top:76.1px;height:19.13px"><div class="cell id" style="left:-0.15px;width:61.07px;height:19.13px;padding-left:3px">118162</div><div class="cell" style="left:60.92px;width:148.16px;height:19.13px">3800702-1</div><div class="cell" style="left:209.08px;width:234.92px;height:19.13px">123</div><div class="cell" style="left:444.0px;width:442.99px;height:19.13px">APU GTCP 131-9B</div><div class="cell" style="left:886.99px;width:43.73px;height:19.13px">1</div><div class="cell" style="left:930.72px;width:51.93px;height:19.13px">EA</div><div class="cell" style="left:982.65px;width:105.02px;height:19.13px">000181023</div><div class="cell" style="left:1087.67px;width:146.78px;height:19.13px">3456</div><div class="cell" style="left:1234.45px;width:60.84px;height:19.13px">AL_ATA</div></div><div class="grow" style="left:0;top:95.23px;height:19.13px"><div class="cell id" style="left:-0.15px;width:61.07px;height:19.13px;padding-left:3px">118160</div><div class="cell" style="left:60.92px;width:148.16px;height:19.13px">0091520200-3</div><div class="cell" style="left:209.08px;width:234.92px;height:19.13px">123</div><div class="cell" style="left:444.0px;width:442.99px;height:19.13px">VENT VALVE-HYD RESERVOIR PRESSUR</div><div class="cell" style="left:886.99px;width:43.73px;height:19.13px">1</div><div class="cell" style="left:930.72px;width:51.93px;height:19.13px">EA</div><div class="cell" style="left:982.65px;width:105.02px;height:19.13px">000151023</div><div class="cell" style="left:1087.67px;width:146.78px;height:19.13px">Q3E5T</div><div class="cell" style="left:1234.45px;width:60.84px;height:19.13px">AL_ATA</div></div><div class="grow" style="left:0;top:114.36px;height:19.13px"><div class="cell id" style="left:-0.15px;width:61.07px;height:19.13px;padding-left:3px">118157</div><div class="cell" style="left:60.92px;width:148.16px;height:19.13px">57186-10</div><div class="cell" style="left:209.08px;width:234.92px;height:19.13px">N123</div><div class="cell" style="left:444.0px;width:442.99px;height:19.13px">PUMP HYDRAULIC AC MOTOR DRIVEN</div><div class="cell" style="left:886.99px;width:43.73px;height:19.13px">1</div><div class="cell" style="left:930.72px;width:51.93px;height:19.13px">EA</div><div class="cell" style="left:982.65px;width:105.02px;height:19.13px">000081023</div><div class="cell" style="left:1087.67px;width:146.78px;height:19.13px">N-1.</div><div class="cell" style="left:1234.45px;width:60.84px;height:19.13px">AL_ATA</div></div><div class="grow" style="left:0;top:133.5px;height:19.13px"><div class="cell id" style="left:-0.15px;width:61.07px;height:19.13px;padding-left:3px">118156</div><div class="cell" style="left:60.92px;width:148.16px;height:19.13px">0016-0015-5</div><div class="cell" style="left:209.08px;width:234.92px;height:19.13px">123</div><div class="cell" style="left:444.0px;width:442.99px;height:19.13px">CAP AY</div><div class="cell" style="left:886.99px;width:43.73px;height:19.13px">1</div><div class="cell" style="left:930.72px;width:51.93px;height:19.13px">EA</div><div class="cell" style="left:982.65px;width:105.02px;height:19.13px">000120923</div><div class="cell" style="left:1087.67px;width:146.78px;height:19.13px">ST-1.1</div><div class="cell" style="left:1234.45px;width:60.84px;height:19.13px">AL_ST</div></div><div class="grow" style="left:0;top:152.63px;height:19.13px"><div class="cell id" style="left:-0.15px;width:61.07px;height:19.13px;padding-left:3px">118153</div><div class="cell" style="left:60.92px;width:148.16px;height:19.13px">3-1558</div><div class="cell" style="left:209.08px;width:234.92px;height:19.13px">8U76</div><div class="cell" style="left:444.0px;width:442.99px;height:19.13px">WHEEL ASSY MLG</div><div class="cell" style="left:886.99px;width:43.73px;height:19.13px">1</div><div class="cell" style="left:930.72px;width:51.93px;height:19.13px">EA</div><div class="cell" style="left:982.65px;width:105.02px;height:19.13px">000070923</div><div class="cell" style="left:1087.67px;width:146.78px;height:19.13px">2E4R</div><div class="cell" style="left:1234.45px;width:60.84px;height:19.13px">AL_DME</div></div><div class="grow" style="left:0;top:171.76px;height:19.13px"><div class="cell id" style="left:-0.15px;width:61.07px;height:19.13px;padding-left:3px">118149</div><div class="cell" style="left:60.92px;width:148.16px;height:19.13px">3-1531</div><div class="cell" style="left:209.08px;width:234.92px;height:19.13px">123678</div><div class="cell" style="left:444.0px;width:442.99px;height:19.13px">WHEEL ASSY-NLG</div><div class="cell" style="left:886.99px;width:43.73px;height:19.13px">1</div><div class="cell" style="left:930.72px;width:51.93px;height:19.13px">EA</div><div class="cell" style="left:982.65px;width:105.02px;height:19.13px">000060923</div><div class="cell" style="left:1087.67px;width:146.78px;height:19.13px">ST10</div><div class="cell" style="left:1234.45px;width:60.84px;height:19.13px">AL_OVB_S7</div></div><div class="grow" style="left:0;top:190.89px;height:19.13px"><div class="cell id" style="left:-0.15px;width:61.07px;height:19.13px;padding-left:3px">118147</div><div class="cell" style="left:60.92px;width:148.16px;height:19.13px">740119G</div><div class="cell" style="left:209.08px;width:234.92px;height:19.13px">123</div><div class="cell" style="left:444.0px;width:442.99px;height:19.13px">IDG-INTEGRATED DRIVE GENERATOR</div><div class="cell" style="left:886.99px;width:43.73px;height:19.13px">2</div><div class="cell" style="left:930.72px;width:51.93px;height:19.13px">EA</div><div class="cell" style="left:982.65px;width:105.02px;height:19.13px">000040923</div><div class="cell" style="left:1087.67px;width:146.78px;height:19.13px">ST 10</div><div class="cell" style="left:1234.45px;width:60.84px;height:19.13px">AL_DME</div></div><div class="grow" style="left:0;top:210.02px;height:19.13px"><div class="cell id" style="left:-0.15px;width:61.07px;height:19.13px;padding-left:3px">118145</div><div class="cell" style="left:60.92px;width:148.16px;height:19.13px">10-3200-6</div><div class="cell" style="left:209.08px;width:234.92px;height:19.13px">987</div><div class="cell" style="left:444.0px;width:442.99px;height:19.13px">VALVE - HYD SHUTOFF</div><div class="cell" style="left:886.99px;width:43.73px;height:19.13px">1</div><div class="cell" style="left:930.72px;width:51.93px;height:19.13px">EA</div><div class="cell" style="left:982.65px;width:105.02px;height:19.13px">000030923</div><div class="cell" style="left:1087.67px;width:146.78px;height:19.13px">ST-1.2</div><div class="cell" style="left:1234.45px;width:60.84px;height:19.13px">AL_ST</div></div><div class="grow" style="left:0;top:229.15px;height:19.13px"><div class="cell id" style="left:-0.15px;width:61.07px;height:19.13px;padding-left:3px">118144</div><div class="cell" style="left:60.92px;width:148.16px;height:19.13px">8054-11-0000</div><div class="cell" style="left:209.08px;width:234.92px;height:19.13px">98-05-2448</div><div class="cell" style="left:444.0px;width:442.99px;height:19.13px">OVEN</div><div class="cell" style="left:886.99px;width:43.73px;height:19.13px">1</div><div class="cell" style="left:930.72px;width:51.93px;height:19.13px">EA</div><div class="cell" style="left:982.65px;width:105.02px;height:19.13px">000010923</div><div class="cell" style="left:1087.67px;width:146.78px;height:19.13px">0N FLOOR</div><div class="cell" style="left:1234.45px;width:60.84px;height:19.13px">AL_DME</div></div><div class="grow" style="left:0;top:248.28px;height:19.13px"><div class="cell id" style="left:-0.15px;width:61.07px;height:19.13px;padding-left:3px">98144</div><div class="cell" style="left:60.92px;width:148.16px;height:19.13px">AIR86410-1</div><div class="cell" style="left:209.08px;width:234.92px;height:19.13px">AL23578</div><div class="cell" style="left:444.0px;width:442.99px;height:19.13px">ACTUATOR - MLG RETRACT</div><div class="cell" style="left:886.99px;width:43.73px;height:19.13px">1</div><div class="cell" style="left:930.72px;width:51.93px;height:19.13px">EA</div><div class="cell" style="left:982.65px;width:105.02px;height:19.13px">000010723</div><div class="cell" style="left:1087.67px;width:146.78px;height:19.13px">ST-1</div><div class="cell" style="left:1234.45px;width:60.84px;height:19.13px">AL_ST</div></div><div class="grow" style="left:0;top:267.41px;height:19.13px"><div class="cell id" style="left:-0.15px;width:61.07px;height:19.13px;padding-left:3px">78137</div><div class="cell" style="left:60.92px;width:148.16px;height:19.13px">3-1530</div><div class="cell" style="left:209.08px;width:234.92px;height:19.13px">987678</div><div class="cell" style="left:444.0px;width:442.99px;height:19.13px">WHEEL ASSY MLG</div><div class="cell" style="left:886.99px;width:43.73px;height:19.13px">1</div><div class="cell" style="left:930.72px;width:51.93px;height:19.13px">EA</div><div class="cell" style="left:982.65px;width:105.02px;height:19.13px">000060323</div><div class="cell" style="left:1087.67px;width:146.78px;height:19.13px">66</div><div class="cell" style="left:1234.45px;width:60.84px;height:19.13px">TY IHGE</div></div><div class="abs track" style="left:1294.71px;top:0px;width:17.470000000000027px;height:277.22px"></div><div class="abs sbtn" style="left:1294.71px;top:0px;width:15.970000000000027px;height:17px"><svg width="10" height="10" viewBox="0 0 10 10" style="position:absolute;left:50%;top:50%;margin:-5px 0 0 -5px"><polygon points="1,6 5,2 9,6" fill="#000"/></svg></div><div class="abs sbtn" style="left:1294.71px;top:17px;width:15.970000000000027px;height:15px"></div><div class="abs sbtn" style="left:1294.71px;top:262.22px;width:15.970000000000027px;height:15px"><svg width="10" height="10" viewBox="0 0 10 10" style="position:absolute;left:50%;top:50%;margin:-5px 0 0 -5px"><polygon points="1,3 5,7 9,3" fill="#000"/></svg></div><div class="abs track" style="left:0px;top:277.22px;width:1294.71px;height:17.810000000000002px"></div><div class="abs sbtn" style="left:0px;top:277.22px;width:16px;height:16.310000000000002px"><svg width="10" height="10" viewBox="0 0 10 10" style="position:absolute;left:50%;top:50%;margin:-5px 0 0 -5px"><polygon points="6,1 2,5 6,9" fill="#000"/></svg></div><div class="abs sbtn" style="left:16px;top:277.22px;width:16.5px;height:16.310000000000002px"></div><div class="abs sbtn" style="left:1279.71px;top:277.22px;width:15px;height:16.310000000000002px"><svg width="10" height="10" viewBox="0 0 10 10" style="position:absolute;left:50%;top:50%;margin:-5px 0 0 -5px"><polygon points="3,1 7,5 3,9" fill="#000"/></svg></div><div class="abs" style="left:1294.71px;top:277.22px;width:17.470000000000027px;height:17.810000000000002px;background:#d6d3ce"></div></div></div>
<div class="abs rs" style="left:25.79px;top:208.66px;width:56.22px;height:22.21px;"><div style="text-align:center;font-size:16.5px;font-weight:bold;line-height:21px;letter-spacing:1.5px;padding-left:2px">RS</div></div>
<div class="abs sunk1 small" style="left:25.45px;top:490.3px;width:511.7px;height:13.77px;"><div style="padding-left:3px;line-height:12.5px">Records from 1 to 353 of 353</div></div>
<div class="abs raised small" style="left:539.11px;top:489.84px;width:79.58px;height:14.69px;"><div style="padding-left:3.5px;line-height:12.5px">Clear Filter</div></div>
<div class="abs sunk1" style="left:621.47px;top:490.3px;width:583.18px;height:13.77px;"></div>
<div class="abs raised small" style="left:1207.77px;top:489.84px;width:17.23px;height:14.69px;"><div style="text-align:center;line-height:11.5px;font-weight:bold;font-size:8.6px;color:#222">&lt;</div></div>
<div class="abs raised small" style="left:1228.13px;top:489.84px;width:17.69px;height:14.69px;"><div style="text-align:center;line-height:11.5px;font-weight:bold;font-size:8.6px;color:#222">&gt;</div></div>
<div class="abs sunk1 small" style="left:1248.6px;top:490.3px;width:93.46px;height:13.77px;"><div style="padding-left:4px;line-height:12.5px">1 / 1</div></div>
<div class="abs lav" style="left:1272.43px;top:510.89px;width:83.04px;height:15.62px;overflow:hidden;border-bottom:0;box-shadow:none;border-right-color:#404040"><svg class="abs" style="left:28.6px;top:0.5px" width="24" height="24" viewBox="0 0 24 24"><path d="M5.5 .6H17.5L22.6 5.6V22.8H5.5Z" fill="#e6eefa" stroke="#8aa4d0" stroke-width="1"/><path d="M22.6 6V22.8H6" fill="none" stroke="#5c7cb8" stroke-width="1.2"/><path d="M17.5 .6V5.6H22.6Z" fill="#f8fbff" stroke="#8aa4d0" stroke-width=".8"/><path d="M8 15.5H20M8 18.5H20M8 12.5H20M13.5 9V21M17.5 9V21" stroke="#b4c6e4" stroke-width="1"/><rect x=".6" y="2.8" width="11.6" height="11.6" fill="#4f9a3c" stroke="#2f6e22" stroke-width="1.1"/><rect x="2.6" y="4.8" width="7.8" height="7.6" fill="#e4f4dc"/><path d="M3.4 5.6L9.6 11.6M9.6 5.6L3.4 11.6" stroke="#2f8a2a" stroke-width="2.1"/></svg></div></div>
<!-- SUB GROUP -->
<div id="sub"><div class="abs grp" style="left:12.61px;top:534.6px;width:1343.56px;height:228.79px;"></div>
<div class="grptitle" style="left:19.2px;top:525.81px">Part Number Substitution:</div>
<div class="abs grid" style="left:27.41px;top:546.52px;width:1313.95px;height:153.95px;"><div class="gi"><div class="grow" style="left:0;top:0;height:19.28px;z-index:2"><div class="cell h" style="height:19.28px;line-height:19px;left:-0.15px;width:42.68px">ID:</div><div class="cell h" style="height:19.28px;line-height:19px;left:42.53px;width:131.4px">Substitute_PN:</div><div class="cell h" style="height:19.28px;line-height:19px;left:173.93px;width:130.35px">Serial_Number:</div><div class="cell h" style="height:19.28px;line-height:19px;left:304.28px;width:173.5px">Interchangeability:</div><div class="cell h" style="height:19.28px;line-height:19px;left:477.78px;width:174.42px">Description:</div><div class="cell h" style="height:19.28px;line-height:19px;left:652.2px;width:42.8px">Qty:</div><div class="cell h" style="height:19.28px;line-height:19px;left:695.0px;width:51.7px">Unit:</div><div class="cell h" style="height:19.28px;line-height:19px;left:746.7px;width:105.49px">Tag_Number:</div><div class="cell h" style="height:19.28px;line-height:19px;left:852.19px;width:130.58px">Store_Address:</div><div class="cell h" style="height:19.28px;line-height:19px;left:982.77px;width:87.21px">Store:</div><div class="cell h" style="height:19.28px;line-height:19px;left:1069.98px;width:111.16px">Expire_Date:</div></div><div class="grow" style="left:0;top:19.28px;height:19.13px"><div class="cell id" style="left:-0.15px;width:42.68px;height:19.13px;padding-left:1.5px">7276</div><div class="cell" style="left:42.53px;width:131.4px;height:19.13px">2607825-2</div><div class="cell" style="left:173.93px;width:130.35px;height:19.13px">B19234/B19234</div><div class="cell" style="left:304.28px;width:173.5px;height:19.13px">Full</div><div class="cell" style="left:477.78px;width:174.42px;height:19.13px">NOSE WHEEL ASSEMBLY</div><div class="cell" style="left:652.2px;width:42.8px;height:19.13px">1</div><div class="cell" style="left:695.0px;width:51.7px;height:19.13px">EA</div><div class="cell" style="left:746.7px;width:105.49px;height:19.13px">000331121</div><div class="cell" style="left:852.19px;width:130.58px;height:19.13px">2 FLOOR</div><div class="cell" style="left:982.77px;width:87.21px;height:19.13px">AL_VKO</div><div class="cell" style="left:1069.98px;width:111.16px;height:19.13px"></div></div><div class="grow" style="left:0;top:38.41px;height:19.13px"><div class="cell id" style="left:-0.15px;width:42.68px;height:19.13px;padding-left:1.5px">7349</div><div class="cell" style="left:42.53px;width:131.4px;height:19.13px">2607825-2</div><div class="cell" style="left:173.93px;width:130.35px;height:19.13px">B8694/B8694</div><div class="cell" style="left:304.28px;width:173.5px;height:19.13px">Full</div><div class="cell" style="left:477.78px;width:174.42px;height:19.13px">NOSE WHEEL ASSEMBLY</div><div class="cell" style="left:652.2px;width:42.8px;height:19.13px">1</div><div class="cell" style="left:695.0px;width:51.7px;height:19.13px">EA</div><div class="cell" style="left:746.7px;width:105.49px;height:19.13px">001051121</div><div class="cell" style="left:852.19px;width:130.58px;height:19.13px">WS</div><div class="cell" style="left:982.77px;width:87.21px;height:19.13px">AL_MJZ</div><div class="cell" style="left:1069.98px;width:111.16px;height:19.13px"></div></div><div class="grow" style="left:0;top:57.54px;height:19.13px"><div class="cell id" style="left:-0.15px;width:42.68px;height:19.13px;padding-left:1.5px">7731</div><div class="cell" style="left:42.53px;width:131.4px;height:19.13px">2607825-2</div><div class="cell" style="left:173.93px;width:130.35px;height:19.13px">B-4761</div><div class="cell" style="left:304.28px;width:173.5px;height:19.13px">Full</div><div class="cell" style="left:477.78px;width:174.42px;height:19.13px">NOSE WHEEL ASSY</div><div class="cell" style="left:652.2px;width:42.8px;height:19.13px">1</div><div class="cell" style="left:695.0px;width:51.7px;height:19.13px">EA</div><div class="cell" style="left:746.7px;width:105.49px;height:19.13px">000010222</div><div class="cell" style="left:852.19px;width:130.58px;height:19.13px">REPAIRED COMP</div><div class="cell" style="left:982.77px;width:87.21px;height:19.13px">AL_OVB_S7</div><div class="cell" style="left:1069.98px;width:111.16px;height:19.13px"></div></div><div class="abs" style="left:0;top:0;width:1182.48px;height:77.76px;border-right:1px solid #000;border-bottom:1px solid #000;box-sizing:border-box;pointer-events:none"></div></div></div>
<div class="abs sunk1 small" style="left:25.45px;top:703.01px;width:201.83px;height:13.76px;"><div style="padding-left:3px;line-height:12.5px">Found 3 Records</div></div>
<svg class="abs" style="left:0;top:0;z-index:9" width="1366" height="733" viewBox="0 0 1366 733"><polygon points="168.64,601.8 347.57,659.87 327.33,691.67" fill="#0b93f9"/><circle cx="346.99" cy="680.69" r="18.4" fill="#0b93f9" stroke="#fff" stroke-width="1.7"/><circle cx="346.99" cy="680.69" r="19.9" fill="none" stroke="#1c1c1c" stroke-width="1.1"/><text x="346.99" y="686.8900000000001" text-anchor="middle" font-family="Liberation Sans,sans-serif" font-size="18.5" font-weight="bold" fill="#fff">6</text></svg></div>
</div>
</body>
</html>
